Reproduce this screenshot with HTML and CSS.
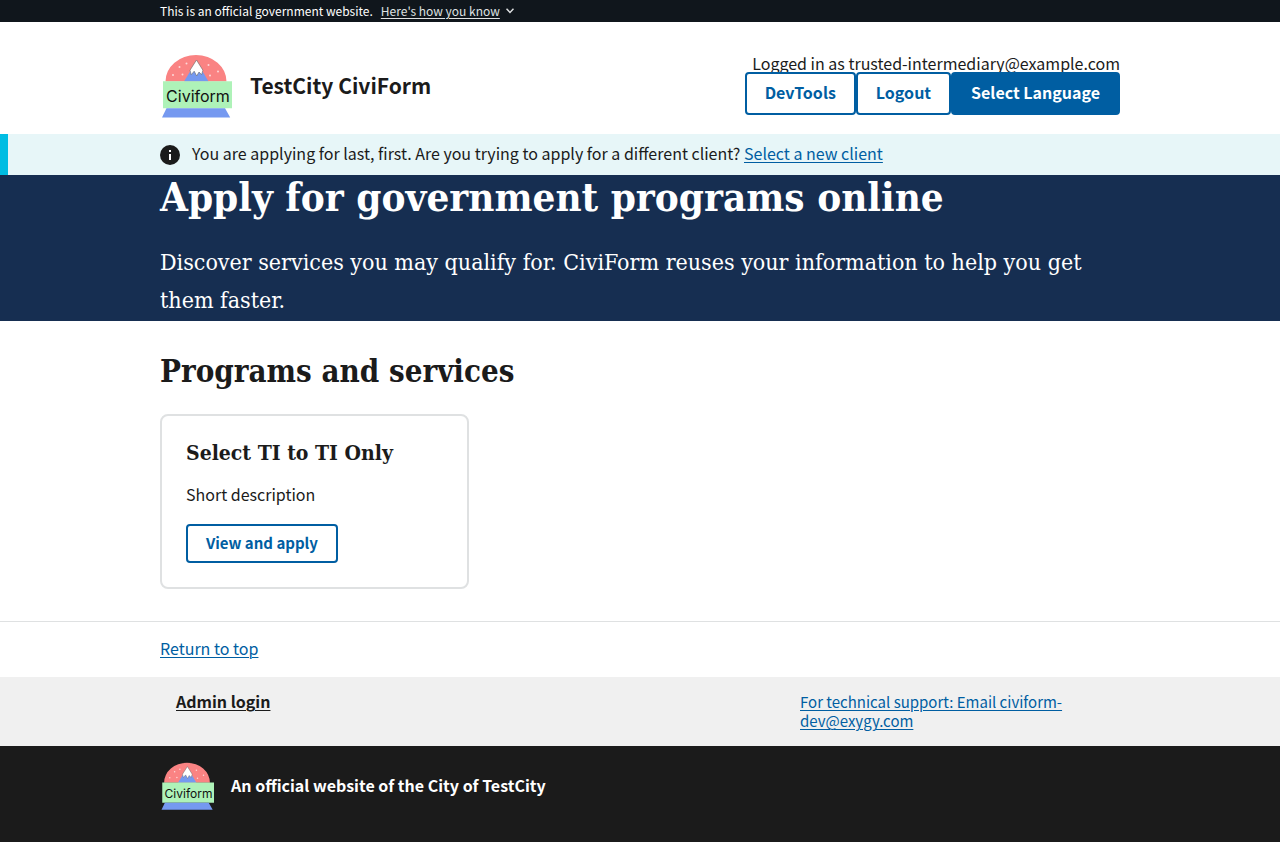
FILE: index.html
```html
<!DOCTYPE html>
<html lang="en">
<head>
<meta charset="utf-8">
<meta name="viewport" content="width=device-width, initial-scale=1">
<title>Find programs</title>
<link rel="stylesheet" href="styles.css">
</head>
<body id="top">
<section class="banner" aria-label="Official website">
  <div class="container banner-row">
    <span>This is an official government website.</span>
    <button type="button" class="banner-button"><span>Here's how you know</span><svg width="8" height="6" viewBox="0 0 8 6"><path d="M.5.700 4 4.400 7.500.7" fill="none" stroke="#dfe1e2" stroke-width="1.500"/></svg></button>
  </div>
</section>
<header class="header">
  <div class="container header-row">
    <a href="#top" class="brand">
      <svg class="logo" viewBox="0 0 72 64" role="img" aria-label="Civiform logo">
        <g id="logo">
          <path d="M5.500 27.500a30.500 26.500 0 0 1 61 0z" fill="#fa8383"/>
          <path d="M24 27.500 36.500 7 48.500 27.500z" fill="#7599f0"/>
          <path d="M36.500 6 30 16.200l1.200 4.500 3-3.500 2.500 4.800 2.300-4 2.600 2.700 1.300-4.500z" fill="#fff" stroke="#666" stroke-width=".6"/>
          <g fill="#fdd8d8"><circle cx="19.500" cy="13" r="1"/><circle cx="26.500" cy="9.500" r="1"/><circle cx="13" cy="21" r="1"/><circle cx="22.500" cy="20.500" r="1"/><circle cx="48.500" cy="11" r="1"/><circle cx="58" cy="17.500" r="1"/><circle cx="50" cy="21.500" r="1"/></g>
          <path d="M3 27.300h69v27H3z" fill="#aef2b8"/>
          <path d="M6.500 54.300h58.500l5.200 9.200H2z" fill="#7599f0"/>
          <text x="38" y="47.500" text-anchor="middle" class="logo-text">Civiform</text>
        </g>
      </svg>
      <span>TestCity CiviForm</span>
    </a>
    <div class="account">
      <div class="account-name">Logged in as trusted-intermediary@example.com</div>
      <div class="account-actions">
        <button type="button" class="button button-header">DevTools</button>
        <button type="button" class="button button-header">Logout</button>
        <button type="button" class="button button-header button-filled">Select Language</button>
      </div>
    </div>
  </div>
</header>
<main>
  <div class="alert">
    <div class="container alert-row">
      <svg width="20" height="20" viewBox="0 0 20 20" aria-hidden="true"><circle cx="10" cy="10" r="10" fill="#1b1b1b"/><path d="M9 5h2v2H9zM9 9h2v6H9z" fill="#fff"/></svg>
      <p>You are applying for last, first. Are you trying to apply for a different client? <a href="#top">Select a new client</a></p>
    </div>
  </div>
  <section class="hero">
    <div class="container">
      <h1>Apply for government programs online</h1>
      <p>Discover services you may qualify for. CiviForm reuses your information to help you get them faster.</p>
    </div>
  </section>
  <section class="container programs">
    <h2>Programs and services</h2>
    <ul class="cards">
      <li class="card">
        <h3>Select TI to TI Only</h3>
        <p>Short description</p>
        <button type="button" class="button">View and apply</button>
      </li>
    </ul>
  </section>
</main>
<footer>
  <div class="return"><div class="container"><a href="#top">Return to top</a></div></div>
  <div class="support">
    <div class="container support-row">
      <a href="#login" class="admin">Admin login</a>
      <a href="mailto:civiform-dev@exygy.com" class="contact">For technical support: Email civiform-dev@exygy.com</a>
    </div>
  </div>
  <div class="identifier">
    <div class="container identifier-row"><svg class="logo-small" viewBox="0 0 72 64" role="img" aria-label="Civiform logo"><use href="#logo"/></svg><span>An official website of the City of TestCity</span></div>
  </div>
</footer>
</body>
</html>
```
FILE: styles.css
```css
* { box-sizing: border-box; }
body {
  margin: 0;
  min-height: 100vh;
  display: flex;
  flex-direction: column;
  background: #fff;
  color: #1b1b1b;
  font: 16px/19px "Noto Sans CJK SC", "Noto Sans", sans-serif;
}
h1, h2, h3, p, ul { margin: 0; padding: 0; }
h1, h2, h3, .hero p { font-family: "DejaVu Serif Condensed", "DejaVu Serif", serif; }
a { color: #005ea2; text-decoration-thickness: 1px; text-underline-offset: 2px; }
.logo-text { font: 400 16px Inter, sans-serif; fill: #111; }
.container { width: 100%; max-width: 1024px; margin: 0 auto; padding: 0 32px; }

.banner { background: #10161c; color: #fff; font-size: 12px; line-height: 22px; }
.banner-row { display: flex; gap: 8px; }
.banner-button {
  display: flex;
  align-items: center;
  gap: 6px;
  padding: 0;
  border: 0;
  background: none;
  color: #dfe1e2;
  font: inherit;
}
.banner-button span { text-decoration: underline; text-underline-offset: 2px; }

.header-row { display: flex; justify-content: space-between; padding-top: 32px; padding-bottom: 16px; }
.brand {
  display: flex;
  align-items: center;
  gap: 18px;
  color: #1b1b1b;
  font-size: 21px;
  font-weight: 700;
  line-height: 24px;
  text-decoration: none;
}
.brand span { padding-bottom: 2px; }
.logo { width: 72px; height: 64px; }
.account { display: flex; flex-direction: column; align-items: flex-end; }
.account-name { height: 18px; }
.account-actions { display: flex; }
.button {
  padding: 7px 18px 9px;
  border: 2px solid #005ea2;
  border-radius: 4px;
  background: #fff;
  color: #005ea2;
  font-family: inherit;
  font-size: 15px;
  font-weight: 700;
  line-height: 19px;
}
.button-header { padding: 9px 18px 11px; font-size: 16px; }
.button-filled { background: #005ea2; color: #fff; }

.alert { border-left: 8px solid #00bde3; padding: 10px 8px 10px 0; background: #e7f6f8; }
.alert-row { display: flex; align-items: center; gap: 12px; }
.alert p { padding-bottom: 2px; }
.hero { background: #162e51; color: #fff; }
.hero h1 { font-size: 40px; line-height: 44px; }
.hero p { padding: 24px 0 2px; font-size: 23px; line-height: 38px; }
.programs { padding-top: 32px; padding-bottom: 32px; }
.programs h2 { font-size: 31px; line-height: 36px; }
.cards { display: grid; grid-template-columns: repeat(3, 1fr); gap: 16px; margin-top: 25px; list-style: none; }
.card { padding: 24px; border: 2px solid #dfe1e2; border-radius: 8px; }
.card h3 { font-size: 21px; line-height: 26px; }
.card p { padding: 15px 0 17px; line-height: 26px; }

footer { display: flex; flex: 1; flex-direction: column; }
.return { padding: 17px 0 19px; border-top: 1px solid #dfe1e2; }
.support { padding: 15px 0 16px; background: #f0f0f0; }
.support-row { display: flex; justify-content: space-between; }
.admin { padding-left: 16px; color: #1b1b1b; font-weight: 700; }
.contact { width: 320px; padding-right: 16px; font-size: 15px; }
.identifier { flex: 1; padding: 16px 0; background: #1b1b1b; color: #fff; font-weight: 700; }
.identifier-row { display: flex; align-items: center; gap: 17px; }
.identifier-row span { padding-bottom: 2px; }
.logo-small { width: 54px; height: 48px; }
```
